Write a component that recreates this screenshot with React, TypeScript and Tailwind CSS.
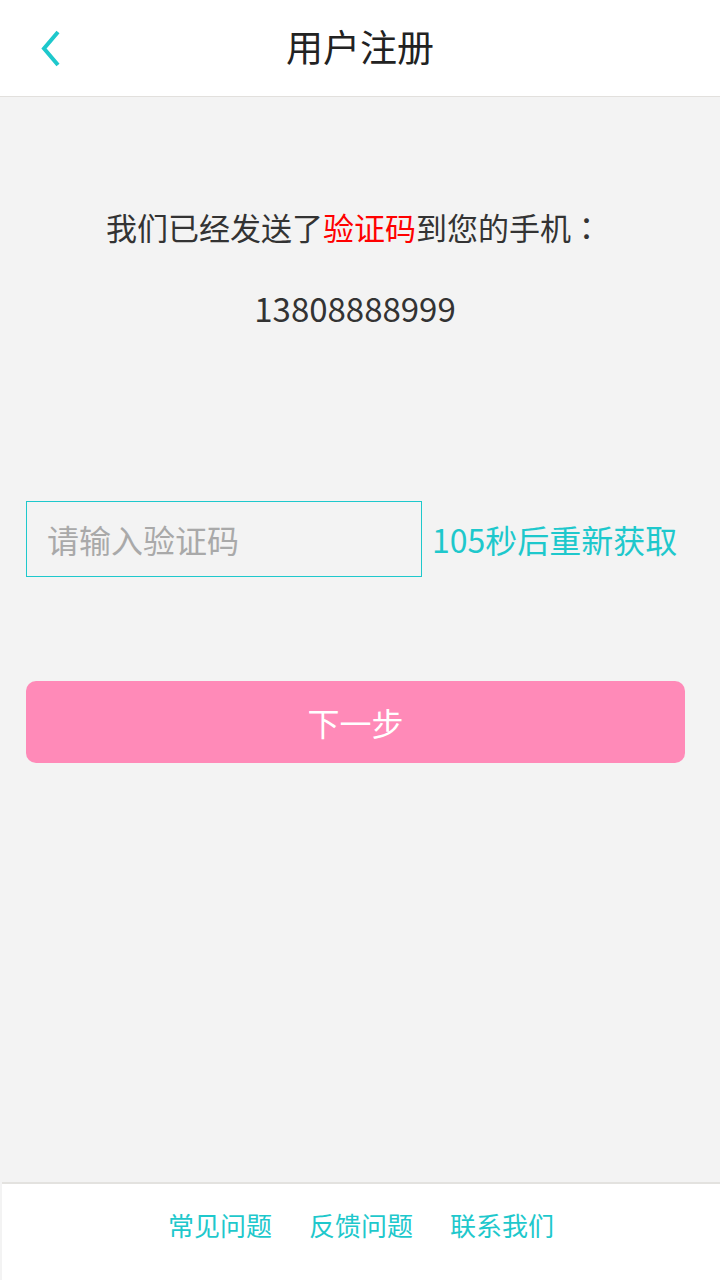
import { useState } from "react";

const font = { fontFamily: '"Noto Sans CJK SC", "Noto Sans", sans-serif' };

function Header() {
  return (
    <header className="relative h-[97px] bg-white border-b border-[#e2e0dd] flex items-center justify-center">
      <button type="button" aria-label="返回" className="absolute left-[34px] top-[25px] p-1">
        <svg width="26" height="40" viewBox="0 0 26 40" fill="none">
          <path d="M20 3 L6 19.5 L20 36" stroke="#1ec8cc" strokeWidth="4" strokeLinecap="butt" strokeLinejoin="miter" />
        </svg>
      </button>
      <h1 className="text-[37px] text-[#222] leading-none -mt-[3px]">用户注册</h1>
    </header>
  );
}

function Footer() {
  return (
    <footer className="ml-[2px] h-[98px] bg-white border-t-2 border-[#e3e2df] flex items-start justify-center gap-[37px] pt-[28px]">
      <a className="text-[26px] text-[#1ec8cc] leading-none">常见问题</a>
      <a className="text-[26px] text-[#1ec8cc] leading-none">反馈问题</a>
      <a className="text-[26px] text-[#1ec8cc] leading-none">联系我们</a>
    </footer>
  );
}

export default function App() {
  const [code, setCode] = useState("");

  return (
    <div style={font} className="w-[720px] h-[1280px] bg-[#f3f3f3] flex flex-col">
      <Header />
      <main className="flex-1 flex flex-col">
        <p className="mt-[114px] pr-[12px] text-center text-[31px] leading-none text-[#333]">
          我们已经发送了<span className="text-[#ff0000]">验证码</span>到您的手机
          <span style={{ fontFamily: '"Noto Sans CJK TC", sans-serif' }}>：</span>
        </p>
        <p className="mt-[50px] pr-[10px] text-center text-[33px] leading-none text-[#333]">13808888999</p>

        <div className="mt-[176px] mx-[26px] flex items-center">
          <input
            value={code}
            onChange={(e) => setCode(e.target.value)}
            placeholder="请输入验证码"
            className="w-[396px] h-[76px] border border-[#1ec8cc] bg-transparent px-[20px] text-[32px] text-[#333] placeholder:text-[#a9a9a9] outline-none"
          />
          <span className="ml-[10px] text-[32px] text-[#1ec8cc] leading-none whitespace-nowrap">105秒后重新获取</span>
        </div>

        <button
          type="button"
          className="mt-[104px] mx-[26px] w-[659px] h-[82px] rounded-[10px] bg-[#ff8ab8] text-white text-[32px]"
        >
          下一步
        </button>
      </main>
      <Footer />
    </div>
  );
}
